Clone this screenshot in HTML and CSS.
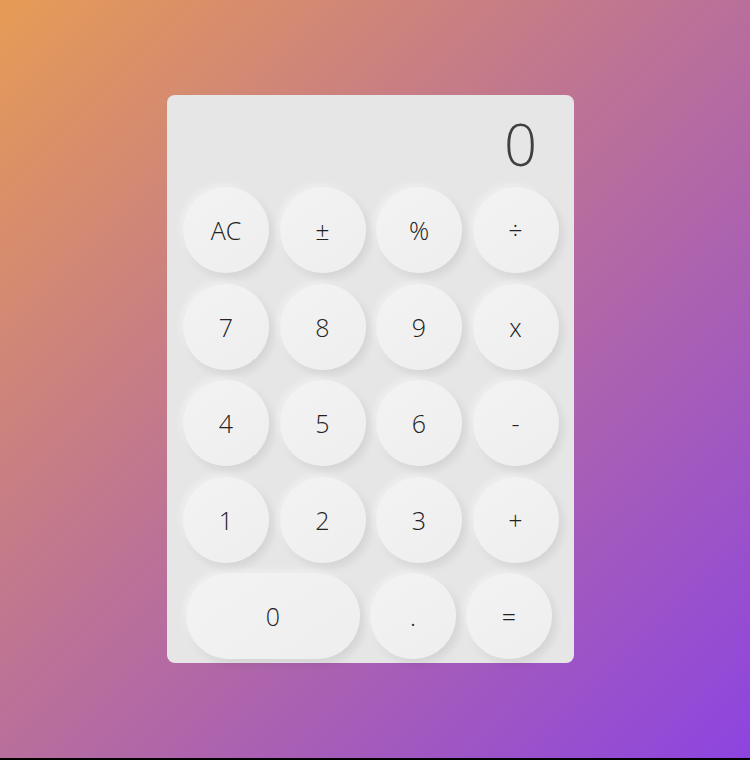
FILE: index.html
```html
<!DOCTYPE html>
<html lang="en">
<head>
<meta charset="utf-8">
<title>Calculator</title>
<link rel="stylesheet" href="styles.css">
</head>
<body>
<div class="page">
  <div class="calc">
    <div class="display">0</div>
    <div class="keys">
      <button class="key">AC</button>
      <button class="key">±</button>
      <button class="key">%</button>
      <button class="key">÷</button>
      <button class="key">7</button>
      <button class="key">8</button>
      <button class="key">9</button>
      <button class="key">x</button>
      <button class="key">4</button>
      <button class="key">5</button>
      <button class="key">6</button>
      <button class="key">-</button>
      <button class="key">1</button>
      <button class="key">2</button>
      <button class="key">3</button>
      <button class="key">+</button>
      <div class="last-row">
        <button class="key zero">0</button>
        <button class="key">.</button>
        <button class="key">=</button>
      </div>
    </div>
  </div>
</div>
</body>
</html>
```

FILE: styles.css
```css
html {
  background: #000;
}
body {
  margin: 0;
  font-family: "Open Sans", "DejaVu Sans", sans-serif;
}
.page {
  height: 758px;
  background: linear-gradient(135deg, #e69c55 0%, #bd7394 45%, #8d44e0 100%);
  display: flex;
  justify-content: flex-start;
  align-items: flex-start;
  padding: 95px 0 0 167px;
  box-sizing: border-box;
}
.calc {
  width: 407px;
  height: 568px;
  background: #e6e6e6;
  border-radius: 8px;
  padding: 16px 15px 4px 16px;
  box-sizing: border-box;
}
.display {
  height: 76px;
  text-align: right;
  font-size: 58px;
  font-weight: 300;
  color: #404040;
  line-height: 60px;
  padding-right: 22px;
  box-sizing: border-box;
  padding-top: 3px;
}
.keys {
  display: grid;
  grid-template-columns: repeat(4, 86px);
  grid-auto-rows: 86px;
  column-gap: 10.5px;
  row-gap: 10.5px;
}
.key {
  border: none;
  border-radius: 50%;
  background: linear-gradient(145deg, #f3f3f3, #eeeeee);
  box-shadow: 4px 5px 8px rgba(0, 0, 0, 0.08), -3px -3px 6px rgba(255, 255, 255, 0.35);
  font-family: "Open Sans", "DejaVu Sans", sans-serif;
  font-size: 25px;
  font-weight: 300;
  color: #222;
  padding: 0;
  width: 86px;
  height: 86px;
}
.last-row {
  grid-column: 1 / span 4;
  display: flex;
  gap: 10px;
  padding-left: 3px;
}
.key.zero {
  width: 174px;
  border-radius: 43px;
}
```
